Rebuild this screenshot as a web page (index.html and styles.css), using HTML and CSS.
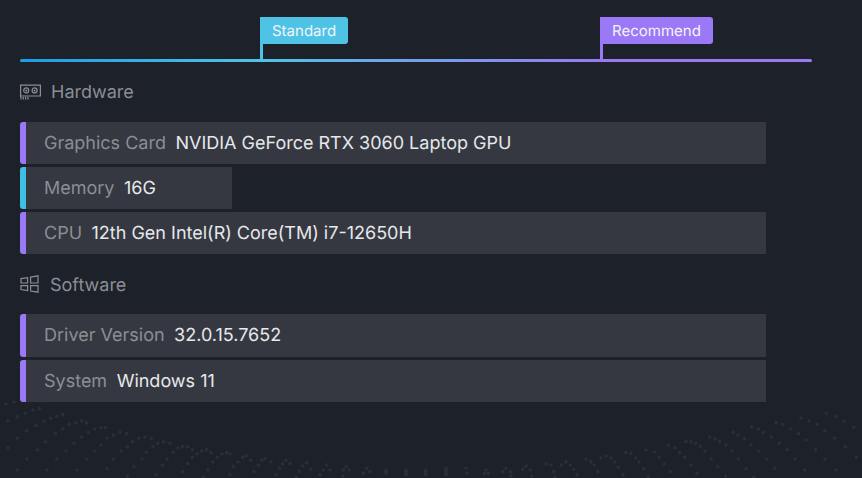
FILE: index.html
```html
<!DOCTYPE html>
<html lang="en">
<head>
<meta charset="utf-8">
<title>System requirements</title>
<link rel="stylesheet" href="styles.css">
</head>
<body>
<svg class="dots" viewBox="0 0 2586 264" aria-hidden="true">
<path d="M18 42h0M42 36h0M24 93h0M52 80h0M76 70h0M99 60h0M118 56h0M52 145h0M80 122h0M108 107h0M132 94h0M152 85h0M170 79h0M188 74h0M24 173h0M113 179h0M137 155h0M166 131h0M188 117h0M208 103h0M227 98h0M245 93h0M260 98h0M80 207h0M198 183h0M222 160h0M245 141h0M265 127h0M284 117h0M303 113h0M317 113h0M52 240h0M170 207h0M283 183h0M303 165h0M321 145h0M340 136h0M360 127h0M380 131h0M141 240h0M260 207h0M364 183h0M382 170h0M397 155h0M416 145h0M435 141h0M454 145h0M231 240h0M340 207h0M426 207h0M439 187h0M459 169h0M473 160h0M491 155h0M510 160h0M321 236h0M402 230h0M487 226h0M501 207h0M520 187h0M534 174h0M548 170h0M563 170h0M577 179h0M382 258h0M468 254h0M548 245h0M563 221h0M577 202h0M591 192h0M605 183h0M620 179h0M633 188h0M610 262h0M624 240h0M638 216h0M652 202h0M666 192h0M680 188h0M690 192h0M690 254h0M700 230h0M714 216h0M728 202h0M738 197h0M752 211h0M762 245h0M775 226h0M785 211h0M795 206h0M813 216h0M828 254h0M838 235h0M848 221h0M858 211h0M870 221h0M888 262h0M898 244h0M908 228h0M920 218h0M932 238h0M960 254h0M970 240h0M980 225h0M990 240h0M1028 258h0M1030 240h0M1038 230h0M1048 240h0M1090 250h0M1100 235h0M1110 245h0M1158 240v10M1218 240v15M1277 240v15"/>
<path transform="translate(1293 0)" d="M45 235v20M105 235h0M108 250h0M165 240h0M160 250h0M172 250h0M225 235h0M215 245h0M238 245h0M240 258h0M285 228h0M275 238h0M298 240h0M302 258h0M345 222h0M360 225h0M368 245h0M372 262h0M405 215h0M392 225h0M418 225h0M428 238h0M438 254h0M465 207h0M480 215h0M490 225h0M500 245h0M525 198h0M510 204h0M540 204h0M550 216h0M562 232h0M576 254h0M585 188h0M600 190h0M614 204h0M624 216h0M638 236h0M652 262h0M645 180h0M670 186h0M685 202h0M700 222h0M718 245h0M712 166h0M732 174h0M746 188h0M761 202h0M780 226h0M798 250h0M765 155h0M780 155h0M794 160h0M808 169h0M822 183h0M841 207h0M860 230h0M884 258h0M836 141h0M852 146h0M866 155h0M884 165h0M903 183h0M922 207h0M945 236h0M968 262h0M907 127h0M921 136h0M940 146h0M960 165h0M983 183h0M1007 207h0M1031 235h0M962 110h0M982 117h0M997 127h0M1021 141h0M1045 160h0M1068 179h0M1092 207h0M1121 240h0M1035 98h0M1054 103h0M1078 117h0M1102 131h0M1125 150h0M1154 179h0M1182 207h0M1215 240h0M1110 84h0M1134 93h0M1158 103h0M1182 122h0M1210 145h0M1243 170h0M1276 202h0M1186 70h0M1215 79h0M1239 94h0M1268 112h0"/>
</svg>
<main class="page">
  <div class="scale">
    <div class="marker marker-standard">
      <span class="flag">Standard</span>
      <span class="pole"></span>
    </div>
    <div class="marker marker-recommend">
      <span class="flag">Recommend</span>
      <span class="pole"></span>
    </div>
  </div>
  <div class="scale-line"></div>

  <h2 class="section section-hardware">
    <svg class="icon" viewBox="0 0 21 16" aria-hidden="true">
      <path class="ln" d="M.6 13V1.200h19.800V12H.6"/>
      <path class="ln" d="M1 13v2.600M3.300 13v2.600M5.600 13v2.600M8 13v2.600"/>
      <circle class="ln" cx="6.200" cy="6.400" r="2.500"/>
      <circle class="ln" cx="14.600" cy="6.400" r="2.500"/>
      <circle class="fill" cx="6.200" cy="6.400" r="1"/>
      <circle class="fill" cx="14.600" cy="6.400" r="1"/>
    </svg>
    <span>Hardware</span>
  </h2>
  <ul class="rows">
    <li class="row row-wide"><span class="label">Graphics Card</span><span class="value">NVIDIA GeForce RTX 3060 Laptop GPU</span></li>
    <li class="row row-short row-blue"><span class="label">Memory</span><span class="value">16G</span></li>
    <li class="row row-wide"><span class="label">CPU</span><span class="value">12th Gen Intel(R) Core(TM) i7-12650H</span></li>
  </ul>

  <h2 class="section section-software">
    <svg class="icon icon-win" viewBox="0 0 19 18" aria-hidden="true">
      <path class="ln" d="M1 3.600 7.600 2.600V8H1zM1 10.600H7.600V15.600L1 14.600zM10.600 2.200 18 .8V8H10.600zM10.600 10.600H18V17.200L10.600 16z"/>
    </svg>
    <span>Software</span>
  </h2>
  <ul class="rows">
    <li class="row row-wide row-tall"><span class="label">Driver Version</span><span class="value">32.0.15.7652</span></li>
    <li class="row row-wide"><span class="label">System</span><span class="value">Windows 11</span></li>
  </ul>
</main>
</body>
</html>
```
FILE: styles.css
```css
* { box-sizing: border-box; }

html, body {
  margin: 0;
  height: 100%;
}

body {
  position: relative;
  overflow: hidden;
  background: #1d2129;
  font-family: Inter, "Liberation Sans", sans-serif;
  text-rendering: geometricPrecision;
}

.dots {
  position: absolute;
  left: 0;
  bottom: 0;
  width: 862px;
  height: 88px;
  fill: none;
  stroke: #2a2e36;
  stroke-width: 11;
  stroke-linecap: round;
}

.page {
  position: relative;
  padding: 17px 0 0 20px;
  width: 812px;
}

.scale {
  display: flex;
  padding-left: 240px;
}

.marker {
  display: flex;
  flex-direction: column;
  align-items: flex-start;
}

.marker-standard { width: 340px; }

.flag {
  height: 27px;
  padding: 0 12px;
  border-radius: 0 3px 3px 0;
  color: #f2f5f8;
  font-size: 15px;
  line-height: 27px;
}

.marker-standard .flag { background: #4fc3e6; }
.marker-recommend .flag { background: #9b78f5; }

.pole {
  width: 3px;
  height: 15px;
}

.marker-standard .pole { background: #4fc3e6; }
.marker-recommend .pole { background: #9b78f5; }

.scale-line {
  width: 792px;
  height: 3px;
  border-radius: 2px;
  background: linear-gradient(90deg, #1e9be8 0, #4fc3e6 30%, #9b78f5 74%, #9b78f5 100%);
}

.section {
  display: flex;
  align-items: center;
  margin: 0;
  color: #8b8e94;
  font-size: 18px;
  font-weight: 400;
  line-height: 20px;
}

.section-hardware {
  gap: 10px;
  padding: 21px 0 19px;
}

.section-software {
  gap: 11px;
  padding: 22px 0 18px;
}

.icon {
  flex: none;
  width: 21px;
  height: 16px;
  margin-top: -3px;
}

.icon-win {
  width: 19px;
  height: 18px;
  margin-top: -4px;
}

.ln {
  fill: none;
  stroke: #8b8e94;
  stroke-width: 1.2;
}

.fill { fill: #8b8e94; }

.rows {
  display: flex;
  flex-direction: column;
  align-items: flex-start;
  gap: 3px;
  margin: 0;
  padding: 0;
  list-style: none;
}

.row {
  display: flex;
  align-items: center;
  gap: 9.5px;
  height: 42px;
  padding: 0 18px;
  border-left: 6px solid #9b78f5;
  border-radius: 3px 0 0 3px;
  background: #353840;
  font-size: 18px;
}

.row-wide { width: 746px; }
.row-short { width: 212px; }
.row-tall { height: 43px; }
.row-blue { border-left-color: #3fbfe6; }

.label { color: #8b8e94; }
.value { color: #e6e8eb; }
```
